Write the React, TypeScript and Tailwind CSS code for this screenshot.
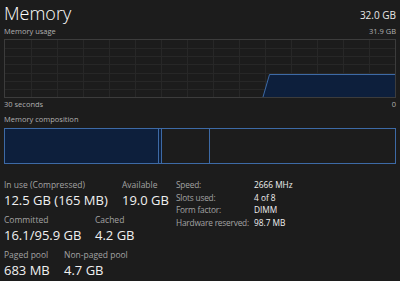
import React from "react";

const font = { fontFamily: '"Open Sans", "Noto Sans", sans-serif' };

function UsageGraph() {
  const W = 390;
  const H = 57;
  const cols = 15;
  const rows = 7;
  const v: React.ReactNode[] = [];
  for (let i = 1; i < cols; i++) {
    const x = Math.round((W / cols) * i) + 0.5;
    v.push(<line key={"v" + i} x1={x} y1={0} x2={x} y2={H} stroke="#272727" strokeWidth={1} />);
  }
  for (let j = 1; j < rows; j++) {
    const y = Math.round((H / rows) * j) + 0.5;
    v.push(<line key={"h" + j} x1={0} y1={y} x2={W} y2={y} stroke="#272727" strokeWidth={1} />);
  }
  return (
    <svg width={W} height={H} className="block">
      {v}
      <path d={`M258 ${H} L264.5 34 L${W} 34 L${W} ${H} Z`} fill="#0d1f3c" />
      <path d={`M258 ${H} L264.5 34.5 L${W} 34.5`} fill="none" stroke="#3d6aa6" strokeWidth={1} />
    </svg>
  );
}

function Stat({ label, value, className = "" }: { label: string; value: string; className?: string }) {
  return (
    <div className={"flex flex-col " + className}>
      <span className="text-[8.5px] leading-[11px] text-[#a3a3a3] whitespace-nowrap">{label}</span>
      <span className="text-[13px] leading-[17px] text-[#f0f0f0] mt-[2px] whitespace-nowrap">{value}</span>
    </div>
  );
}

export default function App() {
  return (
    <div className="w-[400px] h-[281px] bg-[#1c1c1c] px-[4px] overflow-hidden text-[#e0e0e0]" style={font}>
      <div className="flex justify-between items-end h-[24px]">
        <span className="text-[18px] leading-[22px] font-light text-white">Memory</span>
        <span className="text-[10px] leading-[14px] text-[#e8e8e8] mb-[2px]">32.0 GB</span>
      </div>
      <div className="flex justify-between items-center h-[15px] text-[7.5px] text-[#b0b0b0]">
        <span>Memory usage</span>
        <span>31.9 GB</span>
      </div>
      <div className="border border-[#3c3c3c] w-[392px] h-[59px]">
        <UsageGraph />
      </div>
      <div className="flex justify-between items-center h-[14px] text-[7.5px] text-[#b0b0b0]">
        <span>30 seconds</span>
        <span>0</span>
      </div>
      <div className="flex items-center h-[14px] text-[7.5px] text-[#b0b0b0] mt-[1px]">
        <span>Memory composition</span>
      </div>
      <div className="flex w-[392px] h-[36px] mt-[1px]">
        <div className="w-[155px] bg-[#0d1f3c] border border-[#3d6aa6]" />
        <div className="w-[3px] border-y border-r border-[#3d6aa6] bg-[#0d1f3c]" />
        <div className="w-[48px] border-y border-r border-[#3d6aa6]" />
        <div className="flex-1 border-y border-r border-[#3d6aa6]" />
      </div>
      <div className="flex mt-[15px]">
        <div className="w-[172px] flex flex-col gap-[5px]">
          <div className="flex">
            <Stat label="In use (Compressed)" value="12.5 GB (165 MB)" className="w-[118px]" />
            <Stat label="Available" value="19.0 GB" />
          </div>
          <div className="flex">
            <Stat label="Committed" value="16.1/95.9 GB" className="w-[91px]" />
            <Stat label="Cached" value="4.2 GB" />
          </div>
          <div className="flex">
            <Stat label="Paged pool" value="683 MB" className="w-[60px]" />
            <Stat label="Non-paged pool" value="4.7 GB" />
          </div>
        </div>
        <div className="flex flex-col text-[8.3px] leading-[12.7px]">
          {[
            ["Speed:", "2666 MHz"],
            ["Slots used:", "4 of 8"],
            ["Form factor:", "DIMM"],
            ["Hardware reserved:", "98.7 MB"],
          ].map(([l, v]) => (
            <div key={l} className="flex whitespace-nowrap">
              <span className="w-[78px] text-[#a3a3a3] tracking-[-0.2px]">{l}</span>
              <span className="text-[#f0f0f0]">{v}</span>
            </div>
          ))}
        </div>
      </div>
    </div>
  );
}
